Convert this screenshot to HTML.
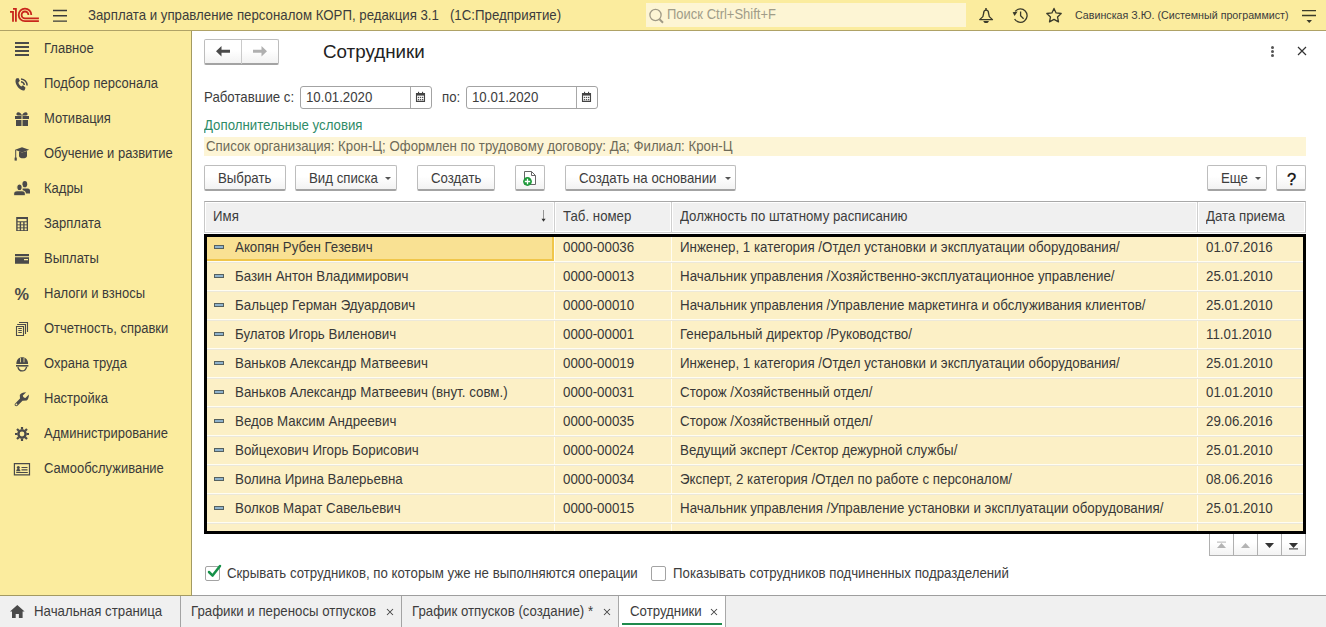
<!DOCTYPE html>
<html><head><meta charset="utf-8">
<style>
*{box-sizing:border-box;margin:0;padding:0}
html,body{width:1326px;height:627px;overflow:hidden;background:#fff;font-family:"Liberation Sans",sans-serif;font-size:13.25px;color:#3d3d3d}
.a{position:absolute;white-space:pre;line-height:15px;transform:scaleY(1.08);transform-origin:0 8px}
.s{font-size:13px;color:#3a3a3a}
.t{color:#383838;font-size:13.33px}
#top{position:absolute;left:0;top:0;width:1326px;height:31px;background:#FBEC9E;border-bottom:1px solid #AFA266}
#side{position:absolute;left:0;top:31px;width:192px;height:564px;background:#FBEC9E;border-right:1px solid #A39A62}
#tabs{position:absolute;left:0;top:595px;width:1326px;height:32px;background:#F0F0F0;border-top:1px solid #9E9E9E}
.btn{position:absolute;border:1px solid #BDBDBD;border-bottom:2px solid #A3A3A3;border-radius:2px;background:linear-gradient(#fff,#fff 45%,#F2F2F2)}
.inp{position:absolute;border:1px solid #A3A3A3;border-radius:3px;background:#fff}
.gl{position:absolute;left:207px;width:1096px;height:1px;background:#FFFDF2}
.ri{position:absolute;left:214px;width:10px;height:4px;background:#8FB2CC;border:1px solid #55605F}
svg{position:absolute;overflow:visible}
.dd{position:absolute;width:0;height:0;border-left:3px solid transparent;border-right:3px solid transparent;border-top:3px solid #555}
</style></head><body>

<div id="top"></div>
<div id="side"></div>
<div id="tabs"></div>

<!-- ===== top bar ===== -->
<svg style="left:0;top:0" width="46" height="30" viewBox="0 0 46 30">
 <g fill="none" stroke="#C8261C" stroke-width="1.8">
  <path d="M10,11.8 H13 V21.8 M13,8.9 H15.9 V21.8"/>
  <path d="M31.3,14.9 A6.3,6.3 0 1 0 25,21.2 H38.9"/>
  <path d="M28.4,14.9 A3.4,3.4 0 1 0 25,18.3 H38.9"/>
 </g>
</svg>
<svg style="left:0;top:0" width="80" height="30">
 <g stroke="#3a3a3a" stroke-width="1.4"><path d="M53,10.5H67M53,15.8H67M53,21.1H67"/></g>
</svg>
<div class="a" style="left:88px;top:8px;color:#3C3C3C">Зарплата и управление персоналом КОРП, редакция 3.1   (1С:Предприятие)</div>
<div style="position:absolute;left:646px;top:3px;width:320px;height:24px;background:#FDF5D4"></div>
<svg style="left:0;top:0" width="700" height="30">
 <g fill="none" stroke="#A09A86" stroke-width="1.3"><circle cx="655.5" cy="15" r="5.6"/><path d="M659.5,19.2 L663,22.7" stroke-width="2"/></g>
</svg>
<div class="a" style="left:667px;top:7px;font-size:13px;color:#A09C88">Поиск Ctrl+Shift+F</div>
<svg style="left:0;top:0" width="1326" height="30">
 <g fill="none" stroke="#3a3a2a" stroke-width="1.3">
  <path d="M983.7,13 C983.7,11 984.6,10.1 986.1,10.1 C987.6,10.1 988.5,11 988.5,13 L989.3,16.6 L992.5,19.6 H979.7 L982.9,16.6 Z" stroke-linejoin="round"/>
  <path d="M1014.6,19 A6.7,6.7 0 1 0 1015.2,11.4"/>
  <path d="M1020.6,11.6 V15.8 L1023.6,18.7"/>
  <path d="M1054,8.4 L1056.1,12.9 L1061.2,13.5 L1057.5,16.9 L1058.5,21.9 L1054,19.4 L1049.5,21.9 L1050.5,16.9 L1046.8,13.5 L1051.9,12.9 Z" stroke-linejoin="round"/>
  <path d="M1302,10.6H1316M1302,15.5H1316"/>
 </g>
 <g fill="#3a3a2a">
  <circle cx="986" cy="9" r="1"/>
  <path d="M983.3,20.9 H988.9 C988.4,22.4 987.4,23.1 986.1,23.1 C984.8,23.1 983.8,22.4 983.3,20.9 Z"/>
  <path d="M1012.6,12.2 L1017.6,11.6 L1014.6,16 Z"/>
  <path d="M1306.5,20.1 H1312 L1309.25,23 Z"/>
 </g>
</svg>
<div class="a" style="left:1075px;top:8px;font-size:10.7px;color:#3C3C3C;transform:none">Савинская З.Ю. (Системный программист)</div>

<!-- ===== sidebar ===== -->
<div class="a s" style="left:44px;top:41px">Главное</div>
<div class="a s" style="left:44px;top:76px">Подбор персонала</div>
<div class="a s" style="left:44px;top:111px">Мотивация</div>
<div class="a s" style="left:44px;top:146px">Обучение и развитие</div>
<div class="a s" style="left:44px;top:181px">Кадры</div>
<div class="a s" style="left:44px;top:216px">Зарплата</div>
<div class="a s" style="left:44px;top:251px">Выплаты</div>
<div class="a s" style="left:44px;top:286px">Налоги и взносы</div>
<div class="a s" style="left:44px;top:321px">Отчетность, справки</div>
<div class="a s" style="left:44px;top:356px">Охрана труда</div>
<div class="a s" style="left:44px;top:391px">Настройка</div>
<div class="a s" style="left:44px;top:426px">Администрирование</div>
<div class="a s" style="left:44px;top:461px">Самообслуживание</div>

<svg style="left:0;top:0" width="40" height="500">
 <g fill="#4a4a4a">
  <!-- главное -->
  <rect x="15" y="42" width="14" height="2"/><rect x="15" y="46" width="14" height="2"/><rect x="15" y="50" width="14" height="2"/><rect x="15" y="54" width="14" height="2"/>
  <!-- phone -->
  <path d="M16.2,78.6 L18.4,77.9 L19.9,80.8 L18.4,82.4 C18.8,84 19.8,85.3 21.3,86.4 L23,85.3 L25.5,87.7 L24.6,90.2 C21.5,91.5 17.3,87.5 15.9,83.6 C15.2,81.6 15.4,79.6 16.2,78.6 Z"/>
  <!-- gift -->
  <path d="M16.5,113.5 C17.5,111.5 20.5,111.8 22,115.3 C23.5,111.8 26.5,111.5 27.5,113.5 C28,114.5 27,115.5 26,115.5 H18 C17,115.5 16,114.5 16.5,113.5 Z"/>
  <rect x="15" y="116" width="6.5" height="3"/><rect x="22.5" y="116" width="6.5" height="3"/>
  <rect x="16" y="120" width="5.5" height="6"/><rect x="22.5" y="120" width="5.5" height="6"/>
  <!-- cap -->
  <path d="M15,149.8 L22,147.2 L29.2,149.8 L22,152.4 Z"/>
  <path d="M19,151.3 L22,152.6 L27,151 V156 C27,157.5 25,158.3 23,158.3 C21,158.3 19,157.5 19,156 Z"/>
  <rect x="15.2" y="150" width="1" height="8"/><rect x="14.6" y="157.6" width="2.2" height="3"/>
  <!-- people -->
  <ellipse cx="24.8" cy="184.2" rx="2.4" ry="3.1"/><path d="M22,188.6 H27.8 C29.4,188.6 30,189.8 30,191 V193.6 H24 Z"/>
  <g stroke="#FBEC9E" stroke-width="1.1"><ellipse cx="19.5" cy="187.3" rx="2.7" ry="3.4"/><path d="M13.6,195.8 V193.8 C13.6,191.8 15,190.8 17,190.8 H22 C24,190.8 25.4,191.8 25.4,193.8 V195.8 Z"/></g>
  <!-- calc -->
  <path d="M16.2,217 H28 V231 H16.2 Z M17.6,219 V221.2 H26.6 V219 Z"/>
  <!-- card -->
  <rect x="15" y="254" width="14" height="2.2"/>
  <path d="M15,257.3 H29 V263.8 H15 Z M24,259 V260.3 H28 V259 Z"/>
  <!-- wrench -->
  <path d="M15.2,403.4 L20,398.6 L19.8,395 C20.5,393.3 23,392.2 26.2,392.2 L22.8,395.4 C23,396.8 24,397.8 25.4,398 L28.9,394.6 C29,397.5 28,400 26.6,400.6 L22.5,400.8 L17.5,405.8 C16.8,406.5 15.7,406.4 15.1,405.8 C14.5,405.2 14.5,404.1 15.2,403.4 Z"/>
 </g>
 <g fill="#FBEC9E">
  <rect x="17.6" y="222.3" width="2.1" height="2.1"/><rect x="21.1" y="222.3" width="2.1" height="2.1"/><rect x="24.6" y="222.3" width="2.1" height="2.1"/>
  <rect x="17.6" y="225.3" width="2.1" height="2.1"/><rect x="21.1" y="225.3" width="2.1" height="2.1"/><rect x="24.6" y="225.3" width="2.1" height="2.1"/>
  <rect x="17.6" y="228.3" width="2.1" height="1.9"/><rect x="21.1" y="228.3" width="2.1" height="1.9"/><rect x="24.6" y="228.3" width="2.1" height="1.9"/>
  <circle cx="16.4" cy="404.4" r="0.9"/>
 </g>
 <text x="14.6" y="300.3" font-family="Liberation Sans" font-weight="bold" font-size="16.3" fill="#4a4a4a">%</text>
 <g fill="none" stroke="#4a4a4a" stroke-width="1.2">
  <!-- waves -->
  <path d="M21,78.9 A6.6,6.6 0 0 1 27.1,85.6" stroke-width="1.5"/>
  <path d="M21,81.8 A3.8,3.8 0 0 1 24.3,85" stroke-width="1.5"/>
  <!-- docs -->
  <path d="M19,322.5 H27.5 V332" stroke-width="1.1"/><path d="M17.2,324.5 H25.5 V334" stroke-width="1.1"/>
  <path d="M16.5,326.5 H23.5 V335.5 H16.5 Z" fill="#FBEC9E" stroke-width="1.1"/>
  <path d="M18.3,328.5 H21.8 M18.3,330.5 H21.8 M18.3,332.5 H21.8" stroke-width="1"/>
  <!-- gear -->
  <circle cx="22" cy="434" r="3.6" stroke-width="2.4"/>
  <path d="M22,427 V429.5 M22,438.5 V441 M15,434 H17.5 M26.5,434 H29 M17,429 L18.8,430.8 M25.2,437.2 L27,439 M27,429 L25.2,430.8 M18.8,437.2 L17,439" stroke-width="2.2"/>
  <!-- id card -->
  <path d="M14.4,463.7 H29.5 V474.8 H14.4 Z"/>
  <path d="M21.5,467.5 H27.5 M21.5,469.8 H27.5 M16.2,472.5 H27.8"/>
 </g>
 <g fill="#4a4a4a">
  <circle cx="18.3" cy="467.4" r="1.5"/><path d="M16.2,471.2 C16.2,469.5 17,469 18.3,469 C19.6,469 20.4,469.5 20.4,471.2 Z"/>
  <!-- helmet -->
  <path d="M16.3,364 C16.3,360 18.8,357.3 22.2,357.3 C25.6,357.3 28.1,360 28.1,364 Z"/>
  <rect x="16" y="365" width="12.4" height="1.6"/>
 </g>
 <g fill="none" stroke="#4a4a4a" stroke-width="1.3">
  <path d="M17.9,367 C18.5,369.6 20.2,370.9 22.2,370.9 C24.2,370.9 25.9,369.6 26.6,366.8"/>
 </g>
 <g fill="#FBEC9E"><rect x="20" y="357.8" width="0.8" height="4.5"/><rect x="23.6" y="357.8" width="0.8" height="4.5"/></g>
</svg>

<!-- ===== form header ===== -->
<div class="btn" style="left:204px;top:39px;width:75px;height:26px"></div>
<div style="position:absolute;left:241px;top:40px;width:1px;height:24px;background:#CACACA"></div>
<svg style="left:0;top:0" width="300" height="70">
 <path d="M216,51.3 L221.5,46 V49.8 H230 V52.8 H221.5 V56.6 Z" fill="#4a4a4a"/>
 <path d="M267,51.3 L261.5,46 V49.8 H253 V52.8 H261.5 V56.6 Z" fill="#B0B0B0"/>
</svg>
<div class="a" style="left:323px;top:42px;font-size:18.8px;line-height:20px;color:#222;transform:none">Сотрудники</div>
<svg style="left:0;top:0" width="1326" height="70">
 <g fill="#555"><circle cx="1272.5" cy="47.4" r="1.5"/><circle cx="1272.5" cy="51.5" r="1.5"/><circle cx="1272.5" cy="55.5" r="1.5"/></g>
 <path d="M1298,47 L1306,55 M1306,47 L1298,55" stroke="#333" stroke-width="1.2"/>
</svg>

<div class="a" style="left:204px;top:90px">Работавшие с:</div>
<div class="inp" style="left:300px;top:86px;width:132px;height:23px"></div>
<div style="position:absolute;left:410px;top:87px;width:1px;height:21px;background:#A8A8A8"></div>
<div class="a" style="left:306px;top:90px">10.01.2020</div>
<div class="a" style="left:442px;top:90px">по:</div>
<div class="inp" style="left:466px;top:86px;width:132px;height:23px"></div>
<div style="position:absolute;left:576px;top:87px;width:1px;height:21px;background:#A8A8A8"></div>
<div class="a" style="left:472px;top:90px">10.01.2020</div>
<svg style="left:0;top:0" width="700" height="120">
 <g id="cal">
  <path d="M416.5,93.6 H424.5 V101.4 H416.5 Z" fill="none" stroke="#444" stroke-width="1.1"/>
  <rect x="416" y="93" width="9" height="2.6" fill="#444"/>
  <rect x="418" y="91.8" width="1.1" height="2" fill="#444"/><rect x="422" y="91.8" width="1.1" height="2" fill="#444"/>
  <g fill="#555"><rect x="417.8" y="96.8" width="1.3" height="1.3"/><rect x="419.9" y="96.8" width="1.3" height="1.3"/><rect x="422" y="96.8" width="1.3" height="1.3"/><rect x="417.8" y="99" width="1.3" height="1.3"/><rect x="419.9" y="99" width="1.3" height="1.3"/><rect x="422" y="99" width="1.3" height="1.3"/></g>
 </g>
 <use href="#cal" x="166" y="0"/>
</svg>

<div class="a" style="left:204px;top:118px;color:#2E8B67">Дополнительные условия</div>
<div style="position:absolute;left:204px;top:137px;width:1102px;height:19px;background:#FDF5D6"></div>
<div class="a" style="left:206px;top:139px;color:#6E6A58">Список организация: Крон-Ц; Оформлен по трудовому договору: Да; Филиал: Крон-Ц</div>

<!-- ===== toolbar ===== -->
<div class="btn" style="left:204px;top:165px;width:82px;height:26px"></div>
<div class="a" style="left:218px;top:171px">Выбрать</div>
<div class="btn" style="left:295px;top:165px;width:102px;height:26px"></div>
<div class="a" style="left:309px;top:171px">Вид списка</div>
<div class="dd" style="left:385px;top:177px"></div>
<div class="btn" style="left:417px;top:165px;width:78px;height:26px"></div>
<div class="a" style="left:431px;top:171px">Создать</div>
<div class="btn" style="left:515px;top:165px;width:30px;height:26px"></div>
<svg style="left:0;top:0" width="600" height="200">
 <path d="M524.5,171.5 H531.5 L535.5,175.5 V184.5 H524.5 Z" fill="#fff" stroke="#666" stroke-width="1"/>
 <path d="M531.5,171.5 V175.5 H535.5" fill="none" stroke="#666" stroke-width="1"/>
 <circle cx="527.5" cy="181.5" r="4.4" fill="#1E9A3A"/>
 <path d="M527.5,178.8 V184.2 M524.8,181.5 H530.2" stroke="#fff" stroke-width="1.3"/>
</svg>
<div class="btn" style="left:565px;top:165px;width:171px;height:26px"></div>
<div class="a" style="left:579px;top:171px">Создать на основании</div>
<div class="dd" style="left:725px;top:177px"></div>
<div class="btn" style="left:1207px;top:165px;width:60px;height:26px"></div>
<div class="a" style="left:1221px;top:171px">Еще</div>
<div class="dd" style="left:1255px;top:177px"></div>
<div class="btn" style="left:1276px;top:165px;width:30px;height:26px"></div>
<div class="a" style="left:1287px;top:171px;font-size:16.5px;line-height:17px;color:#111;-webkit-text-stroke:0.35px #111;transform:none">?</div>

<!-- ===== table header ===== -->
<div style="position:absolute;left:204px;top:201px;width:1102px;height:32px;background:#fff;border-top:1px solid #A8A8A8;border-left:1px solid #C8C8C8;border-right:1px solid #C8C8C8"></div>
<div style="position:absolute;left:205px;top:202px;width:349px;height:30px;background:#F0F0F0;border:1px solid #fff"></div>
<div style="position:absolute;left:555px;top:202px;width:116px;height:30px;background:#F0F0F0;border:1px solid #fff"></div>
<div style="position:absolute;left:672px;top:202px;width:525px;height:30px;background:#F0F0F0;border:1px solid #fff"></div>
<div style="position:absolute;left:1198px;top:202px;width:107px;height:30px;background:#F0F0F0;border:1px solid #fff"></div>
<div style="position:absolute;left:554px;top:202px;width:1px;height:30px;background:#CFCFCF"></div>
<div style="position:absolute;left:671px;top:202px;width:1px;height:30px;background:#CFCFCF"></div>
<div style="position:absolute;left:1197px;top:202px;width:1px;height:30px;background:#CFCFCF"></div>
<div style="position:absolute;left:204px;top:232px;width:1102px;height:1px;background:#CFCFCF"></div>
<div class="a" style="left:213px;top:209px">Имя</div>
<div class="a" style="left:563px;top:209px">Таб. номер</div>
<div class="a" style="left:680px;top:209px">Должность по штатному расписанию</div>
<div class="a" style="left:1206px;top:209px">Дата приема</div>
<svg style="left:0;top:0" width="600" height="240">
 <path d="M543.5,210 V219.5" stroke="#8a8a8a" stroke-width="0.9"/>
 <path d="M541.5,218.8 H545.6 L543.5,221.8 Z" fill="#333"/>
</svg>

<!-- ===== table body ===== -->
<div style="position:absolute;left:204px;top:234px;width:1102px;height:300px;background:#FCF0C6"></div>
<div style="position:absolute;left:554px;top:233px;width:1px;height:298px;background:#FFFDF2"></div>
<div style="position:absolute;left:671px;top:233px;width:1px;height:298px;background:#FFFDF2"></div>
<div style="position:absolute;left:1197px;top:233px;width:1px;height:298px;background:#FFFDF2"></div>
<div style="position:absolute;left:205px;top:234px;width:349px;height:27px;background:#F9E193;border:2px solid #F0C64A"></div>
<div class="gl" style="top:261px"></div>
<div class="gl" style="top:262px;background:#ECE8DA"></div>
<div class="gl" style="top:290px"></div>
<div class="gl" style="top:291px;background:#ECE8DA"></div>
<div class="gl" style="top:319px"></div>
<div class="gl" style="top:320px;background:#ECE8DA"></div>
<div class="gl" style="top:348px"></div>
<div class="gl" style="top:349px;background:#ECE8DA"></div>
<div class="gl" style="top:377px"></div>
<div class="gl" style="top:378px;background:#ECE8DA"></div>
<div class="gl" style="top:406px"></div>
<div class="gl" style="top:407px;background:#ECE8DA"></div>
<div class="gl" style="top:435px"></div>
<div class="gl" style="top:436px;background:#ECE8DA"></div>
<div class="gl" style="top:464px"></div>
<div class="gl" style="top:465px;background:#ECE8DA"></div>
<div class="gl" style="top:493px"></div>
<div class="gl" style="top:494px;background:#ECE8DA"></div>
<div class="gl" style="top:522px"></div>
<div class="gl" style="top:523px;background:#ECE8DA"></div>
<div class="ri" style="top:245px"></div>
<div class="a t" style="left:235px;top:239.5px">Акопян Рубен Гезевич</div>
<div class="a t" style="left:563px;top:239.5px">0000-00036</div>
<div class="a t" style="left:680px;top:239.5px">Инженер, 1 категория /Отдел установки и эксплуатации оборудования/</div>
<div class="a t" style="left:1206px;top:239.5px">01.07.2016</div>
<div class="ri" style="top:274px"></div>
<div class="a t" style="left:235px;top:268.5px">Базин Антон Владимирович</div>
<div class="a t" style="left:563px;top:268.5px">0000-00013</div>
<div class="a t" style="left:680px;top:268.5px">Начальник управления /Хозяйственно-эксплуатационное управление/</div>
<div class="a t" style="left:1206px;top:268.5px">25.01.2010</div>
<div class="ri" style="top:303px"></div>
<div class="a t" style="left:235px;top:297.5px">Бальцер Герман Эдуардович</div>
<div class="a t" style="left:563px;top:297.5px">0000-00010</div>
<div class="a t" style="left:680px;top:297.5px">Начальник управления /Управление маркетинга и обслуживания клиентов/</div>
<div class="a t" style="left:1206px;top:297.5px">25.01.2010</div>
<div class="ri" style="top:332px"></div>
<div class="a t" style="left:235px;top:326.5px">Булатов Игорь Виленович</div>
<div class="a t" style="left:563px;top:326.5px">0000-00001</div>
<div class="a t" style="left:680px;top:326.5px">Генеральный директор /Руководство/</div>
<div class="a t" style="left:1206px;top:326.5px">11.01.2010</div>
<div class="ri" style="top:361px"></div>
<div class="a t" style="left:235px;top:355.5px">Ваньков Александр Матвеевич</div>
<div class="a t" style="left:563px;top:355.5px">0000-00019</div>
<div class="a t" style="left:680px;top:355.5px">Инженер, 1 категория /Отдел установки и эксплуатации оборудования/</div>
<div class="a t" style="left:1206px;top:355.5px">25.01.2010</div>
<div class="ri" style="top:390px"></div>
<div class="a t" style="left:235px;top:384.5px">Ваньков Александр Матвеевич (внут. совм.)</div>
<div class="a t" style="left:563px;top:384.5px">0000-00031</div>
<div class="a t" style="left:680px;top:384.5px">Сторож /Хозяйственный отдел/</div>
<div class="a t" style="left:1206px;top:384.5px">01.01.2010</div>
<div class="ri" style="top:419px"></div>
<div class="a t" style="left:235px;top:413.5px">Ведов Максим Андреевич</div>
<div class="a t" style="left:563px;top:413.5px">0000-00035</div>
<div class="a t" style="left:680px;top:413.5px">Сторож /Хозяйственный отдел/</div>
<div class="a t" style="left:1206px;top:413.5px">29.06.2016</div>
<div class="ri" style="top:448px"></div>
<div class="a t" style="left:235px;top:442.5px">Войцехович Игорь Борисович</div>
<div class="a t" style="left:563px;top:442.5px">0000-00024</div>
<div class="a t" style="left:680px;top:442.5px">Ведущий эксперт /Сектор дежурной службы/</div>
<div class="a t" style="left:1206px;top:442.5px">25.01.2010</div>
<div class="ri" style="top:477px"></div>
<div class="a t" style="left:235px;top:471.5px">Волина Ирина Валерьевна</div>
<div class="a t" style="left:563px;top:471.5px">0000-00034</div>
<div class="a t" style="left:680px;top:471.5px">Эксперт, 2 категория /Отдел по работе с персоналом/</div>
<div class="a t" style="left:1206px;top:471.5px">08.06.2016</div>
<div class="ri" style="top:506px"></div>
<div class="a t" style="left:235px;top:500.5px">Волков Марат Савельевич</div>
<div class="a t" style="left:563px;top:500.5px">0000-00015</div>
<div class="a t" style="left:680px;top:500.5px">Начальник управления /Управление установки и эксплуатации оборудования/</div>
<div class="a t" style="left:1206px;top:500.5px">25.01.2010</div>
<div style="position:absolute;left:204px;top:234px;width:1102px;height:300px;border:3px solid #000"></div>

<!-- scroll buttons -->
<div style="position:absolute;left:1209px;top:534px;width:97px;height:22px;border:1px solid #B0B0B0;border-top:none;background:linear-gradient(#fff,#fff 40%,#F3F3F3)"></div>
<div style="position:absolute;left:1233px;top:534px;width:1px;height:21px;background:#B0B0B0"></div>
<div style="position:absolute;left:1257px;top:534px;width:1px;height:21px;background:#B0B0B0"></div>
<div style="position:absolute;left:1281px;top:534px;width:1px;height:21px;background:#B0B0B0"></div>
<svg style="left:0;top:0" width="1326" height="600">
 <g fill="#B3B3B3"><rect x="1217" y="541.6" width="9" height="1"/><path d="M1217,548 L1221.5,543 L1226,548 Z"/><path d="M1241,548 L1245.5,543 L1250,548 Z"/></g>
 <g fill="#333"><path d="M1265,543 L1269.5,548 L1274,543 Z"/><path d="M1289,543 L1293.5,548 L1298,543 Z"/><rect x="1289" y="548.4" width="9" height="1"/></g>
</svg>

<!-- ===== checkboxes ===== -->
<div class="inp" style="left:205px;top:566px;width:15px;height:15px;border-radius:2px"></div>
<svg style="left:0;top:0" width="300" height="600">
 <path d="M209,572 L212.6,575.6 L220,566" fill="none" stroke="#169149" stroke-width="2.5" stroke-linecap="round" stroke-linejoin="round"/>
</svg>
<div class="a" style="left:227px;top:566px">Скрывать сотрудников, по которым уже не выполняются операции</div>
<div class="inp" style="left:651px;top:566px;width:15px;height:15px;border-radius:2px"></div>
<div class="a" style="left:673px;top:566px">Показывать сотрудников подчиненных подразделений</div>

<!-- ===== tabs ===== -->
<div style="position:absolute;left:0;top:595px;width:192px;height:1px;background:#A39A62"></div>
<div style="position:absolute;left:180px;top:596px;width:1px;height:31px;background:#A3A3A3"></div>
<div style="position:absolute;left:401px;top:596px;width:1px;height:31px;background:#A3A3A3"></div>
<svg style="left:0;top:0" width="40" height="627">
 <path d="M17.3,605 L10,611.5 H12 V618 H15.7 V614 H18.9 V618 H22.6 V611.5 H24.6 Z" fill="#4a4a4a"/>
</svg>
<div class="a" style="left:34px;top:604px">Начальная страница</div>
<div class="a" style="left:191px;top:604px">Графики и переносы отпусков</div>
<div class="a" style="left:412px;top:604px">График отпусков (создание) *</div>
<div style="position:absolute;left:618px;top:596px;width:108px;height:31px;background:#fff;border-left:1px solid #A8A8A8;border-right:1px solid #A8A8A8"></div>
<div style="position:absolute;left:622px;top:623px;width:100px;height:2px;background:#1F8A4C"></div>
<div class="a" style="left:630px;top:604px">Сотрудники</div>
<svg style="left:0;top:0" width="1326" height="627">
 <g stroke="#444" stroke-width="1.05"><path d="M387,609 L393,615 M393,609 L387,615"/><path d="M604,609 L610,615 M610,609 L604,615"/><path d="M711,609 L717,615 M717,609 L711,615"/></g>
</svg>

</body></html>
